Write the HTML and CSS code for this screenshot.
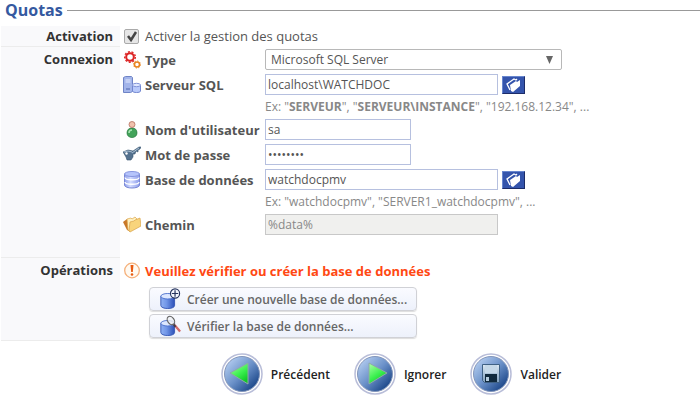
FILE: index.html
```html
<!DOCTYPE html>
<html lang="fr">
<head>
    <meta charset="UTF-8" />
    <title>Quotas</title>
    <link rel="stylesheet" href="styles.css">
</head>
<body>

<!-- Shared drawings -->
<svg class="defs" width="0" height="0" aria-hidden="true">
    <defs>
        <linearGradient id="dbFill" x1="0" x2="1">
            <stop offset="0" stop-color="#8fb0f2" />
            <stop offset="0.4" stop-color="#7297e8" />
            <stop offset="1" stop-color="#2c50b8" />
        </linearGradient>
        <linearGradient id="lightDb" x1="0" x2="1">
            <stop offset="0" stop-color="#8f9fea" />
            <stop offset="0.4" stop-color="#d3dcff" />
            <stop offset="1" stop-color="#8c9cea" />
        </linearGradient>
        <linearGradient id="ball" x1="0" y1="0" x2="1" y2="1">
            <stop offset="0.1" stop-color="#b4cdf0" />
            <stop offset="0.5" stop-color="#6a90c8" />
            <stop offset="0.85" stop-color="#1f4a8c" />
        </linearGradient>
        <linearGradient id="arrow" x1="0" y1="0" x2="0.6" y2="1">
            <stop offset="0" stop-color="#b0ffa8" />
            <stop offset="0.6" stop-color="#3cf050" />
            <stop offset="1" stop-color="#10c828" />
        </linearGradient>
        <linearGradient id="metal" x1="0" y1="0" x2="0" y2="1">
            <stop offset="0" stop-color="#dce9f4" />
            <stop offset="1" stop-color="#7c9cbc" />
        </linearGradient>
        <symbol id="folder" viewBox="0 0 21 16">
            <path d="M7 13L4 7l7-5 2 1 1-1" fill="none" stroke="#fff" stroke-width="1.3" />
            <path d="M7 8l6-4 1 1 3-2v6l-7 6-2-1z" fill="#fff" />
        </symbol>
        <symbol id="cylinder" viewBox="0 0 24 24">
            <path d="M2 9v10c0 4.500 15 4.500 15 0V9z" fill="url(#dbFill)" stroke="#3457b5" />
            <ellipse cx="9.500" cy="9" rx="7.500" ry="3" fill="#dce7ff" stroke="#4b70cc" />
        </symbol>
        <symbol id="disc" viewBox="0 0 42 42">
            <circle cx="21" cy="21" r="20" fill="#fff" stroke="#b8bdd8" stroke-width="1.5" />
            <circle cx="21" cy="21" r="17.5" fill="url(#ball)" stroke="#8496ba" />
        </symbol>
    </defs>
</svg>

<form id="quotaForm">
    <h2>Quotas</h2>

    <div class="section">
        <h3>Activation</h3>
        <div class="content">
            <div class="check-row">
                <input type="checkbox" id="enabled" checked />
                <label for="enabled">Activer la gestion des quotas</label>
            </div>
        </div>
    </div>

    <div class="section connection">
        <h3>Connexion</h3>
        <div class="content">
            <div class="row">
                <svg class="icon" viewBox="0 0 18 18">
                    <circle cx="7" cy="6" r="3.8" fill="none" stroke="#dc2323" stroke-width="2" />
                    <circle cx="7" cy="6" r="5.3" fill="none" stroke="#dc2323" stroke-width="1.4" stroke-dasharray="2 1.7" />
                    <circle cx="14" cy="13.500" r="2.5" fill="none" stroke="#e88420" stroke-width="1.5" />
                    <circle cx="14" cy="13.500" r="3.500" fill="none" stroke="#e88420" stroke-dasharray="1.3 1.4" />
                </svg>
                <label for="type">Type</label>
                <select id="type">
                    <option>Microsoft SQL Server</option>
                </select>
            </div>
            <div class="row">
                <svg class="icon" viewBox="0 0 18 18">
                    <path d="M.5 1.5l2-1h6l1 1v14l-2 1h-7z" fill="#a3b5ea" stroke="#6f84c6" />
                    <path d="M2.5 4h5M2.5 6h5" stroke="#e6ecff" />
                    <path d="M3 13h4" stroke="#4f66ad" />
                    <path d="M9.5 9v6c0 2 8 2 8 0V9z" fill="#b8c9fa" stroke="#7387d0" />
                    <ellipse cx="13.5" cy="9" rx="4" ry="1.7" fill="#e0e8ff" stroke="#8395d8" />
                </svg>
                <label for="server">Serveur SQL</label>
                <input type="text" id="server" value="localhost\WATCHDOC" />
                <button type="button" class="browse" aria-label="Parcourir les serveurs">
                    <svg viewBox="0 0 21 16"><use href="#folder" /></svg>
                </button>
            </div>
            <p class="hint">Ex: "<b>SERVEUR</b>", "<b>SERVEUR\INSTANCE</b>", "192.168.12.34", ...</p>
            <div class="row">
                <svg class="icon" viewBox="0 0 18 18">
                    <path d="M4 12c0-3.500 2-5 5-5s5 1.500 5 5c0 6-10 6-10 0z" fill="#43a35a" stroke="#27783d" stroke-width=".7" />
                    <path d="M6 12c0-2 1-3 3-3" fill="none" stroke="#a8e6b2" stroke-width="1.5" />
                    <circle cx="9" cy="3.500" r="3" fill="#f1c2ad" stroke="#b5705f" stroke-width=".8" />
                </svg>
                <label for="username">Nom d'utilisateur</label>
                <input type="text" id="username" class="short" value="sa" />
            </div>
            <div class="row">
                <svg class="icon" viewBox="0 0 18 18">
                    <path d="M0 6l5-2 5 1 6-4 2 0-1 2-2 1 0 2-2-1-1 3-2 0 0 3-2 3-4 0-1-3z" fill="#55728f" stroke="#38546f" stroke-width=".6" />
                    <path d="M1 6l4-1 4 1M9 7l7-5" fill="none" stroke="#a9bfd2" />
                    <circle cx="3.500" cy="7.500" r="1.200" fill="#fff" />
                </svg>
                <label for="password">Mot de passe</label>
                <input type="password" id="password" class="short" value="watchdoc" />
            </div>
            <div class="row">
                <svg class="icon" viewBox="0 0 18 18">
                    <path d="M1.500 3v11c0 4 15 4 15 0v-11z" fill="url(#lightDb)" stroke="#7887d5" />
                    <path d="M2 6.500c0 3 14 3 14 0M2 11c0 3 14 3 14 0" fill="none" stroke="#fff" stroke-width="1.3" />
                    <ellipse cx="9" cy="3" rx="7.500" ry="2.500" fill="#b5c4fb" stroke="#8796e0" />
                </svg>
                <label for="database">Base de données</label>
                <input type="text" id="database" value="watchdocpmv" />
                <button type="button" class="browse" aria-label="Parcourir les bases">
                    <svg viewBox="0 0 21 16"><use href="#folder" /></svg>
                </button>
            </div>
            <p class="hint">Ex: "watchdocpmv", "SERVER1_watchdocpmv", ...</p>
            <div class="row">
                <svg class="icon" viewBox="0 0 18 18">
                    <path d="M0 6l4-3 2 2 0 10-2-1z" fill="#c87828" />
                    <path d="M4 3l4-1 1 1 3-2 2 2-7 12-2-1z" fill="#fff0bd" stroke="#dda64c" stroke-width=".7" />
                    <path d="M7 6l4-1 1-1 5-2 1 8-11 6-1-1z" fill="#f8d47c" stroke="#d9a24a" stroke-width=".7" />
                </svg>
                <label for="path">Chemin</label>
                <input type="text" id="path" value="%data%" disabled />
            </div>
        </div>
    </div>

    <div class="section operations">
        <h3>Opérations</h3>
        <div class="content">
            <div class="warning">
                <svg class="icon" viewBox="0 0 18 18">
                    <circle cx="9" cy="8.500" r="7.300" fill="#fffaf2" stroke="#f5b07a" stroke-width="1.3" />
                    <path d="M7.500 3h3l-.7 7H8.200z" fill="#e85a10" />
                    <circle cx="9" cy="12.500" r="1.300" fill="#e85a10" />
                </svg>
                <span>Veuillez vérifier ou créer la base de données</span>
            </div>
            <div class="actions">
                <button type="button">
                    <svg viewBox="0 0 24 24">
                        <use href="#cylinder" />
                        <circle cx="17.500" cy="6" r="5" fill="#f4f7ff" stroke="#26345e" stroke-width="1.200" />
                        <path d="M14 6h7M17.500 2.500v7" stroke="#26345e" stroke-width="1.300" />
                    </svg>
                    Créer une nouvelle base de données...
                </button>
                <button type="button">
                    <svg viewBox="0 0 24 24">
                        <use href="#cylinder" />
                        <path d="M17 11l6 7" stroke="#d06a6a" stroke-width="2.500" />
                        <path d="M15 9l3 4" stroke="#443c44" stroke-width="2" />
                        <ellipse cx="13" cy="6" rx="3.500" ry="5" transform="rotate(-35 13 6)" fill="#edf0f4" fill-opacity=".8" stroke="#666" stroke-width="1.300" />
                    </svg>
                    Vérifier la base de données...
                </button>
            </div>
        </div>
    </div>

    <div class="nav">
        <button type="button">
            <svg viewBox="0 0 42 42">
                <use href="#disc" />
                <path d="M9 20L27 10v21z" fill="url(#arrow)" stroke="#8fa8a8" />
            </svg>
            Précédent
        </button>
        <button type="button">
            <svg viewBox="0 0 42 42">
                <use href="#disc" />
                <path d="M33 20L15 10v21z" fill="url(#arrow)" stroke="#8fa8a8" />
            </svg>
            Ignorer
        </button>
        <button type="submit">
            <svg viewBox="0 0 42 42">
                <use href="#disc" />
                <path d="M12.500 11.500h17v18h-15l-2-2z" fill="url(#metal)" stroke="#3f6185" />
                <path d="M15 12h12v8H15z" fill="#c5d8e8" />
                <path d="M15 21h12v8H15z" fill="#10293c" />
                <path d="M16 24h3v4h-3z" fill="#b5cbdd" />
            </svg>
            Valider
        </button>
    </div>
</form>

</body>
</html>
```
FILE: styles.css
```css
* {
    box-sizing: border-box;
}
body {
    margin: 0;
    font-family: "Open Sans", "Noto Sans", sans-serif;
    font-size: 12px;
    line-height: 16px;
    color: #555;
    background-color: #fff;
}
.defs {
    position: absolute;
}
h2, h3, p {
    margin: 0;
}
h2 {
    display: flex;
    align-items: center;
    gap: 4px;
    padding-left: 5px;
    font-size: 16px;
    line-height: 20px;
    color: #3559a0;
}
h2::after {
    content: "";
    flex: 1;
    height: 1px;
    background-color: #999;
}
form {
    display: flex;
    flex-direction: column;
}
.section {
    display: grid;
    grid-template-columns: 120px 1fr;
    min-height: 21px;
}
.section:first-of-type {
    margin-top: 6px;
}
h3 {
    padding: 2px 7px 0 0;
    margin-left: 1px;
    text-align: right;
    color: #333;
    background-color: #f9f9fb;
    border-bottom: 1px solid #ececec;
}
.connection h3,
.operations h3 {
    padding-top: 4px;
}
h3, .row label, .warning {
    font-size: 13px;
    font-weight: 700;
}
.content {
    padding-left: 3px;
}
.check-row {
    display: flex;
    align-items: center;
    gap: 6px;
    padding: 2px 0 3px;
    font-size: 13px;
}
input[type="checkbox"] {
    appearance: none;
    width: 15px;
    height: 15px;
    margin: 0 0 0 1px;
    border: 1px solid #aaa;
    border-radius: 2px;
    background: #e6e6e6 url('data:image/svg+xml,%3Csvg xmlns="http://www.w3.org/2000/svg" viewBox="0 0 13 13"%3E%3Cpath d="M3 6l3 4 5-8" fill="none" stroke="%23444" stroke-width="2.5"/%3E%3C/svg%3E') center no-repeat;
}
.connection .content {
    display: flex;
    flex-direction: column;
    gap: 4px;
    padding-top: 2px;
    padding-bottom: 23px;
}
.row {
    display: grid;
    grid-template-columns: 18px 116px minmax(0, 233px) 23px;
    column-gap: 4px;
    align-items: center;
    height: 21px;
}
.row label {
    white-space: nowrap;
}
.icon {
    width: 18px;
    height: 18px;
}
input[type="text"],
input[type="password"],
select {
    width: 233px;
    height: 21px;
    padding: 0 2px;
    font: inherit;
    color: #555;
    background-color: #fff;
    border: 1px solid #b6c0df;
}
input.short {
    width: 146px;
}
input:disabled {
    color: #888;
    background-color: #f0f0ee;
    border: 1px solid #c8c8c8;
}
select {
    appearance: none;
    width: 297px;
    padding: 0 5px;
    border: 1px solid #b8b8b8;
    border-radius: 2px;
    background: url('data:image/svg+xml,%3Csvg xmlns="http://www.w3.org/2000/svg" viewBox="0 0 7 8"%3E%3Cpath d="M0 0h7L3.5 8z" fill="%23666"/%3E%3C/svg%3E') right 8px center / 7px 8px no-repeat;
}
.browse {
    width: 23px;
    height: 18px;
    padding: 0;
    background-color: #3454ac;
    border: 1px solid;
    border-color: #6886ce #1c2c68 #1c2c68 #6886ce;
}
.browse svg {
    display: block;
    width: 21px;
    height: 16px;
}
.hint {
    padding-left: 142px;
    color: #888;
}
.operations {
    min-height: 83px;
}
.warning {
    display: flex;
    align-items: center;
    gap: 4px;
    padding-top: 4px;
    color: #ff4813;
}
.actions {
    display: flex;
    flex-direction: column;
    gap: 3px;
    width: 268px;
    margin: 7px 0 0 26px;
}
button {
    font-family: inherit;
    font-size: 12px;
    font-weight: 600;
    cursor: pointer;
}
.actions button {
    display: flex;
    align-items: center;
    gap: 5px;
    height: 24px;
    padding: 0 8px;
    color: #666;
    white-space: nowrap;
    background: linear-gradient(#fafbff, #edf1fb);
    border: 1px solid #d0d1d6;
    border-radius: 4px;
    box-shadow: 0 1px 1px #ddd;
}
.actions svg {
    width: 24px;
    height: 22px;
}
.nav {
    display: flex;
    justify-content: center;
    gap: 24px;
    padding: 12px 0 4px 82px;
}
.nav button {
    display: flex;
    align-items: center;
    gap: 8px;
    padding: 0;
    color: #222;
    background: none;
    border: none;
}
.nav svg {
    width: 42px;
    height: 42px;
}
```
